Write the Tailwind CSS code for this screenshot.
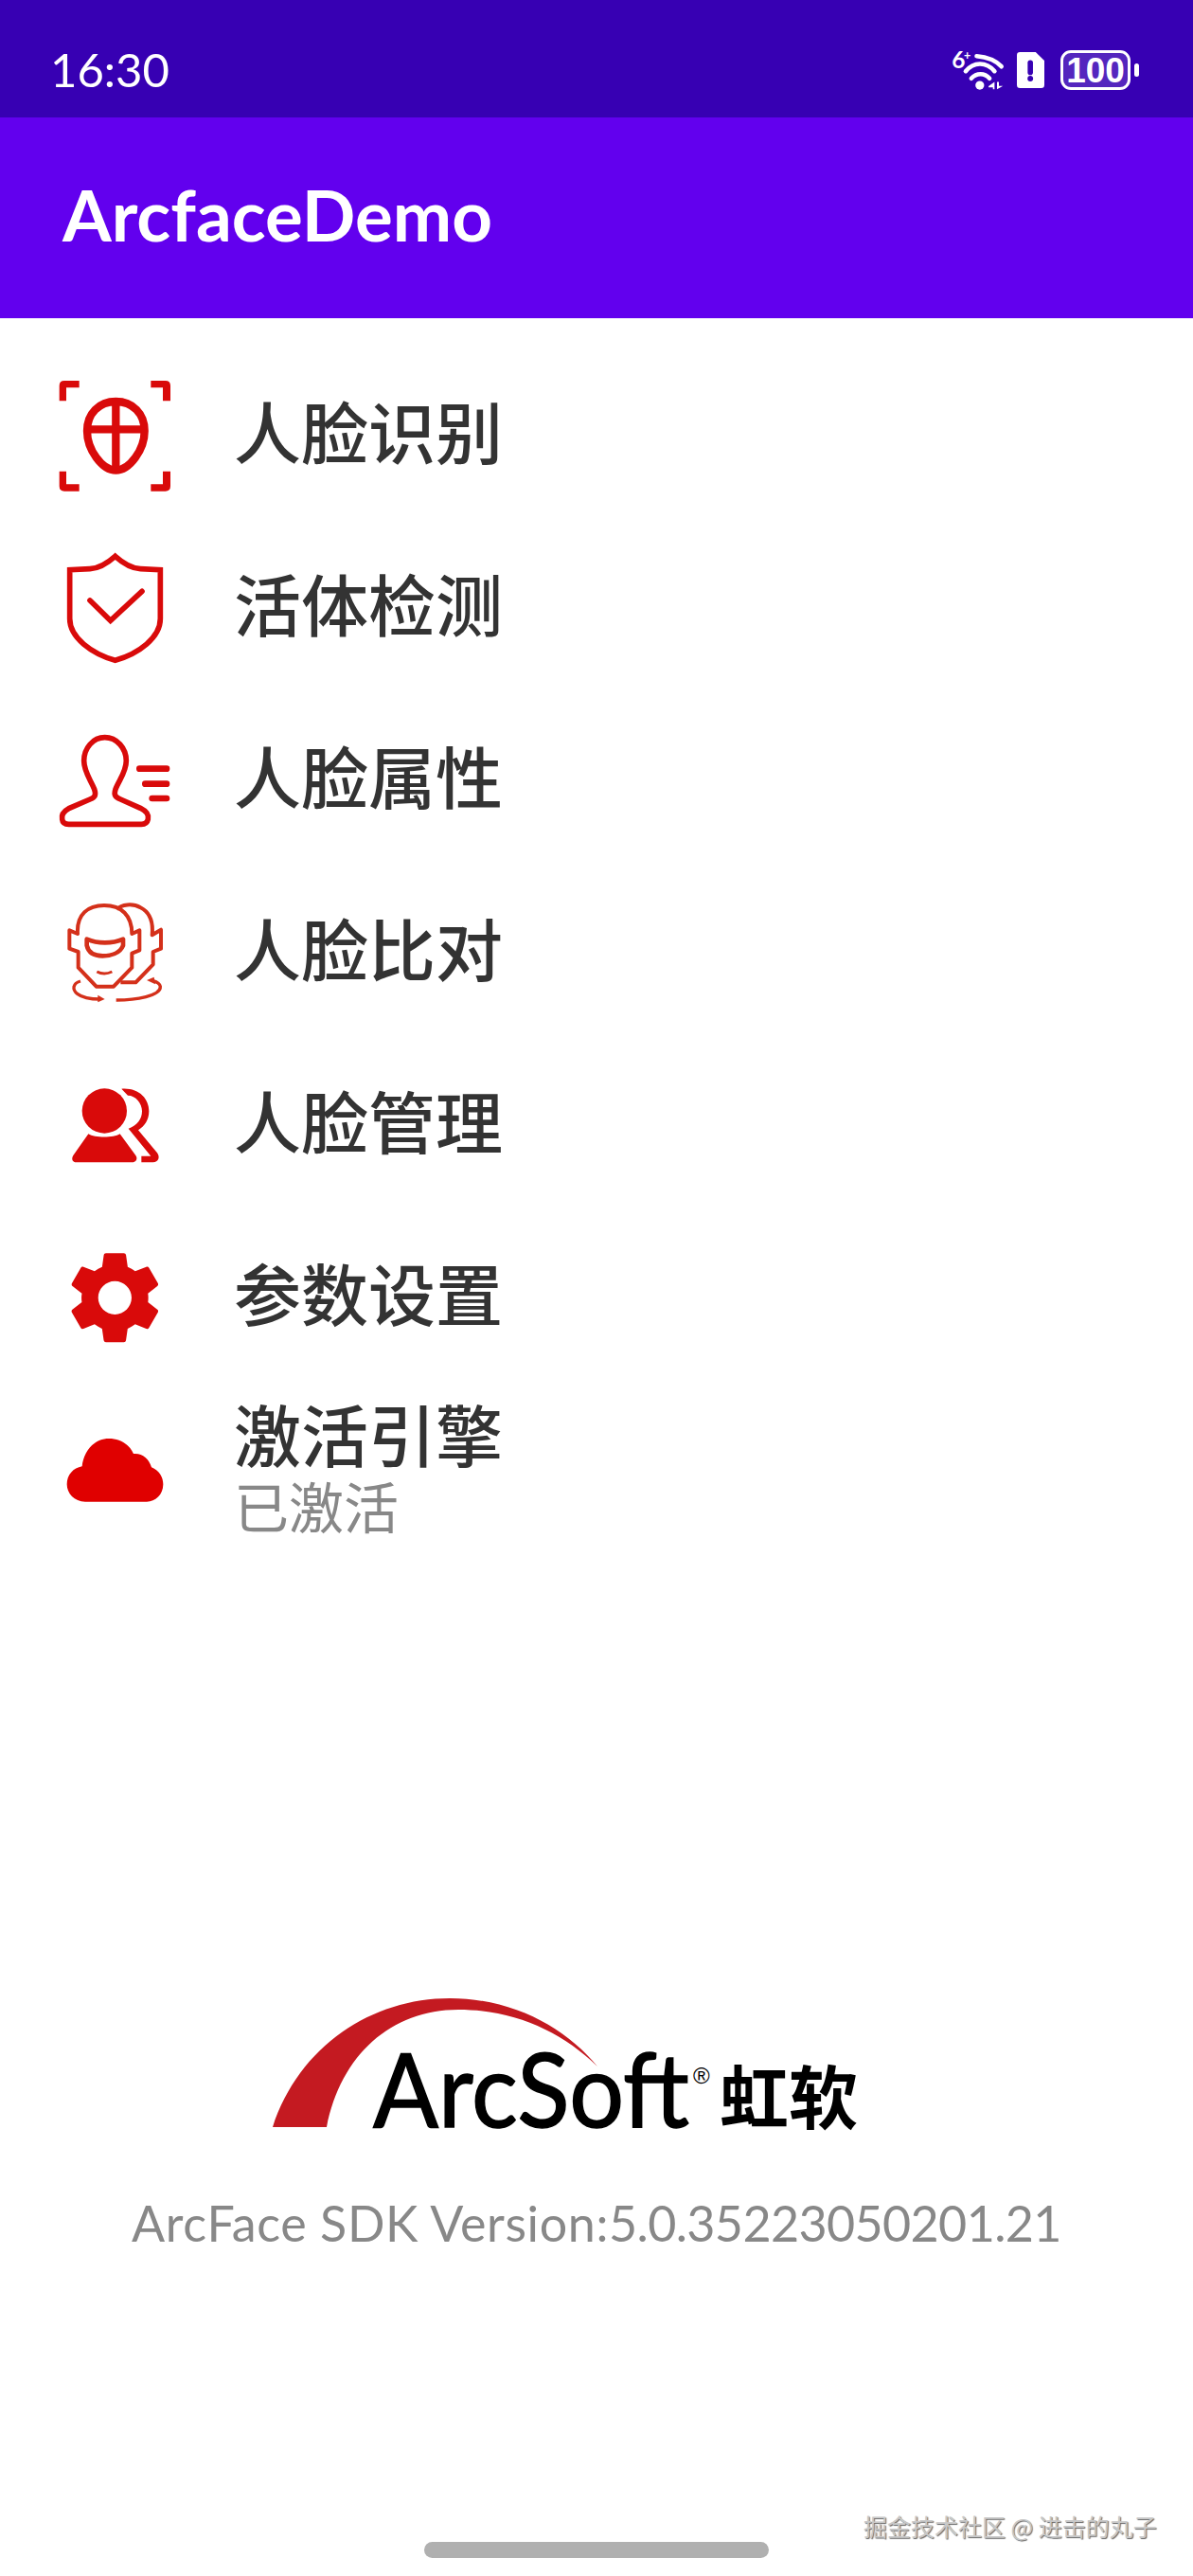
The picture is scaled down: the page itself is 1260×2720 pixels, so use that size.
<!DOCTYPE html>
<html lang="zh">
<head>
<meta charset="utf-8">
<script src="https://cdn.jsdelivr.net/npm/@tailwindcss/browser@4"></script>
</head>
<body class="bg-white">
<div class="relative w-[1260px] h-[2720px] overflow-hidden flex flex-col bg-white font-['Lato','Noto_Sans_CJK_SC',sans-serif]">
  <header class="h-[124px] pt-[26px] bg-[#3700b3] flex items-center justify-between pl-[53px] pr-[57px] text-white">
    <span class="text-[49px] mb-[4px] font-normal font-['Lato',sans-serif] leading-none">16:30</span>
    <div class="flex items-center mb-[2px]">
      <svg class="w-[57px] h-[45px]" viewBox="222 90 172 136" fill="none" stroke="white" stroke-linecap="round">
        <path d="M305 112 C340 115 368 128 384 145" stroke-width="14"/>
        <path d="M270 160 C295 130 335 128 362 160" stroke-width="14"/>
        <path d="M288 183 C305 165 330 165 346 183" stroke-width="14"/>
        <circle cx="315" cy="205" r="14" fill="white" stroke="none"/>
        <text x="226" y="150" font-size="74" font-weight="700" fill="white" stroke="none" font-family="Lato">6</text>
        <text x="264" y="124" font-size="38" font-weight="700" fill="white" stroke="none" font-family="Lato">+</text>
        <path d="M343 208 L362 194 V218 H357 V212 H343 Z M370 194 V218 L389 207 H376 V194 Z" fill="white" stroke="none"/>
      </svg>
      <svg class="w-[29px] h-[38px] ml-[13px]" viewBox="432 103 88 115">
        <path fill="white" d="M442 103 H492 L520 130 V208 Q520 218 510 218 H442 Q432 218 432 208 V113 Q432 103 442 103 Z"/>
        <path d="M475 137 V168" stroke="#3700b3" stroke-width="17" stroke-linecap="round"/>
        <circle cx="475" cy="188" r="9" fill="#3700b3"/>
      </svg>
      <div class="flex items-center ml-[17px]">
        <div class="w-[74px] h-[42px] rounded-[11px] border-[3px] border-white bg-white/15 flex items-center justify-center text-[37px] leading-none font-bold font-['Liberation_Sans',sans-serif]">100</div>
        <div class="w-[5px] h-[14px] bg-white rounded-full ml-[4px]"></div>
      </div>
    </div>
  </header>

  <div class="h-[212px] pb-[8px] bg-[#6200ee] flex items-center pl-[66px]">
    <h1 class="text-[74.5px] leading-none font-bold text-white font-['Lato',sans-serif]">ArcfaceDemo</h1>
  </div>

  <main class="pt-[31px] flex flex-col">
    <div class="h-[182px] flex items-center pl-[61px]">
      <svg class="w-[120px] h-[120px] overflow-visible shrink-0" viewBox="63 54 360 360" fill="#d90a0a">
        <path d="M68 130 V82 Q68 66 84 66 H131 V88 H90 V130 Z M358 66 H404 Q420 66 420 82 V130 H396 V88 H358 Z M68 353 H90 V394 H131 V416 H84 Q68 416 68 400 Z M396 353 H420 V400 Q420 416 404 416 H358 V394 H396 Z"/>
        <path d="M247 132 C300 132 338 170 338 225 C338 285 290 350 247 350 C204 350 156 285 156 225 C156 170 194 132 247 132 Z M247 132 V350 M156 220 H338" fill="none" stroke="#d90a0a" stroke-width="25"/>
      </svg>
      <span class="ml-[66px] mb-[4px] text-[71px] leading-none font-medium text-[#333]">人脸识别</span>
    </div>
    <div class="h-[182px] flex items-center pl-[61px]">
      <svg class="w-[120px] h-[120px] overflow-visible shrink-0" viewBox="63 600 360 360" fill="none" stroke="#d90a0a" stroke-width="17">
        <path d="M245 622 C225 640 195 660 165 662 L101 665 V820 C101 880 170 930 245 952 C320 930 388 880 388 820 V665 L325 662 C295 660 265 640 245 622 Z"/>
        <path d="M165 762 L230 826 L330 733" stroke-linecap="round"/>
      </svg>
      <span class="ml-[66px] mb-[4px] text-[71px] leading-none font-medium text-[#333]">活体检测</span>
    </div>
    <div class="h-[182px] flex items-center pl-[61px]">
      <svg class="w-[120px] h-[120px] overflow-visible shrink-0" viewBox="63 66 360 360" fill="none" stroke="#d90a0a" stroke-width="17">
        <path d="M212 116 C250 116 280 150 280 190 C280 225 258 250 246 280 C240 298 245 305 262 312 L325 340 C345 350 352 362 349 375 C347 385 340 391 328 391 H98 C85 391 78 385 77 375 C74 362 82 350 100 340 L165 312 C182 305 185 298 179 280 C167 250 146 225 146 190 C146 150 175 116 212 116 Z"/>
        <path d="M322 215 H408 M340 263 H408 M362 309 H408" stroke-width="20" stroke-linecap="round"/>
      </svg>
      <span class="ml-[66px] mb-[4px] text-[71px] leading-none font-medium text-[#333]">人脸属性</span>
    </div>
    <div class="h-[182px] flex items-center pl-[61px]">
      <svg class="w-[120px] h-[120px] overflow-visible shrink-0" viewBox="63 612 360 360" fill="none" stroke="#d4301a" stroke-width="12" stroke-linejoin="round">
        <path d="M126 738 C122 675 160 648 210 648 C265 648 298 680 298 738 L322 727 V790 L298 800 V845 L240 905 H185 L128 845 V795 L100 785 V727 Z"/>
        <path d="M250 660 C265 645 300 640 325 655 C355 670 366 700 362 742 L390 725 V785 L365 795 V835 L310 892 H262"/>
        <path d="M155 755 C190 770 235 770 270 755 V775 C260 800 230 808 205 808 C180 808 160 798 155 775 Z" stroke-width="14"/>
        <path d="M187 858 Q210 870 235 858" stroke-width="9"/>
        <path d="M135 888 C110 895 108 915 125 928 C140 940 170 945 198 945" stroke-width="10"/>
        <path d="M190 932 L212 945 L190 955 Z" fill="#d4301a" stroke="none"/>
        <path d="M248 948 C310 948 390 935 388 905 C386 895 375 890 365 887" stroke-width="10"/>
        <path d="M345 885 L368 875 L372 898 Z" fill="#d4301a" stroke="none"/>
      </svg>
      <span class="ml-[66px] mb-[4px] text-[71px] leading-none font-medium text-[#333]">人脸比对</span>
    </div>
    <div class="h-[182px] flex items-center pl-[61px]">
      <svg class="w-[120px] h-[120px] overflow-visible shrink-0" viewBox="63 48 360 360" fill="#d90a0a">
        <circle cx="211" cy="189" r="71"/>
        <path d="M160 262 C180 275 240 275 260 262 L310 330 C318 342 310 352 298 352 H122 C110 352 105 342 112 330 Z"/>
        <path d="M265 119 C320 115 352 150 352 190 C352 218 338 238 318 250 L378 322 C388 336 382 352 365 352 H328 V332 H358 L287 245 C315 235 330 215 330 190 C330 165 310 140 285 140 Z"/>
      </svg>
      <span class="ml-[66px] mb-[4px] text-[71px] leading-none font-medium text-[#333]">人脸管理</span>
    </div>
    <div class="h-[182px] flex items-center pl-[61px]">
      <svg class="w-[120px] h-[120px] overflow-visible shrink-0" viewBox="63 594 360 360" fill="#d90a0a">
        <g transform="translate(244 781) scale(14.7) translate(-12 -12)">
          <path fill-rule="evenodd" d="M19.14,12.94c0.04-0.3,0.06-0.61,0.06-0.94c0-0.32-0.02-0.64-0.07-0.94l2.03-1.58c0.18-0.14,0.23-0.41,0.12-0.61 l-1.92-3.32c-0.12-0.22-0.37-0.29-0.59-0.22l-2.39,0.96c-0.5-0.38-1.03-0.7-1.62-0.94L14.4,2.81c-0.04-0.24-0.24-0.41-0.48-0.41 h-3.84c-0.24,0-0.43,0.17-0.47,0.41L9.25,5.35C8.66,5.59,8.12,5.92,7.63,6.29L5.24,5.33c-0.22-0.08-0.47,0-0.59,0.22L2.74,8.87 C2.62,9.08,2.66,9.34,2.86,9.48l2.03,1.58C4.84,11.36,4.8,11.69,4.8,12s0.02,0.64,0.07,0.94l-2.03,1.58 c-0.18,0.14-0.23,0.41-0.12,0.61l1.92,3.32c0.12,0.22,0.37,0.29,0.59,0.22l2.39-0.96c0.5,0.38,1.03,0.7,1.62,0.94l0.36,2.54 c0.05,0.24,0.24,0.41,0.48,0.41h3.84c0.24,0,0.44-0.17,0.47-0.41l0.36-2.54c0.59-0.24,1.13-0.56,1.62-0.94l2.39,0.96 c0.22,0.08,0.47,0,0.59-0.22l1.92-3.32c0.12-0.22,0.07-0.47-0.12-0.61L19.14,12.94z M12,15.6c-1.98,0-3.6-1.62-3.6-3.6 s1.62-3.6,3.6-3.6s3.6,1.62,3.6,3.6S13.98,15.6,12,15.6z"/>
        </g>
      </svg>
      <span class="ml-[66px] mb-[4px] text-[71px] leading-none font-medium text-[#333]">参数设置</span>
    </div>
    <div class="h-[182px] flex items-center pl-[61px]">
      <svg class="w-[120px] h-[120px] overflow-visible shrink-0" viewBox="63 30 360 360" fill="#e00000">
        <path d="M150 317 C115 317 92 290 92 262 C92 232 112 210 140 205 C145 155 180 117 225 117 C260 117 290 135 303 165 C330 162 352 180 360 208 C385 218 397 240 397 262 C397 295 372 317 345 317 Z"/>
      </svg>
      <div class="ml-[66px] pt-[6px] flex flex-col">
        <span class="text-[71px] leading-[76px] font-medium text-[#333]">激活引擎</span>
        <span class="mt-[2px] text-[58px] leading-[72px] text-[#888]">已激活</span>
      </div>
    </div>
  </main>

  <section class="mt-auto mb-[347px] flex flex-col items-center">
    <svg class="w-[620px] h-[140px] ml-[-64px]" viewBox="0 0 620 140">
      <path fill="#c41a21" d="M0 136 C28 50 105 0 187 0 C255 0 310 32 343 72 C305 35 255 12 196 12 C125 12 72 60 57 136 Z"/>
      <text x="106" y="136" font-size="108" font-family="Lato, sans-serif" font-weight="400" textLength="334" lengthAdjust="spacingAndGlyphs" fill="#000" stroke="#000" stroke-width="1.5">ArcSoft</text>
      <text x="444" y="90" font-size="24" font-family="Liberation Sans, sans-serif" fill="#000">®</text>
      <text x="472" y="132" font-size="73" font-weight="700" font-family="Noto Sans CJK SC, sans-serif" fill="#000">虹软</text>
    </svg>
    <p class="mt-[71px] text-[52px] leading-none text-[#888] font-['Lato',sans-serif]"><span class="tracking-[0.6px]">ArcFace SDK Version:</span><span class="tracking-[-0.63px]">5.0.35223050201.21</span></p>
  </section>

  <span class="absolute left-[912px] top-[2651px] text-[25px] leading-[32px] text-[#c8c8c8] [text-shadow:1px_1px_1px_#666] font-['Noto_Sans_CJK_SC',sans-serif]">掘金技术社区 @ 进击的丸子</span>
  <div class="absolute left-[448px] top-[2684px] w-[364px] h-[17px] rounded-full bg-[#b0b0b0]"></div>
</div>
</body>
</html>
